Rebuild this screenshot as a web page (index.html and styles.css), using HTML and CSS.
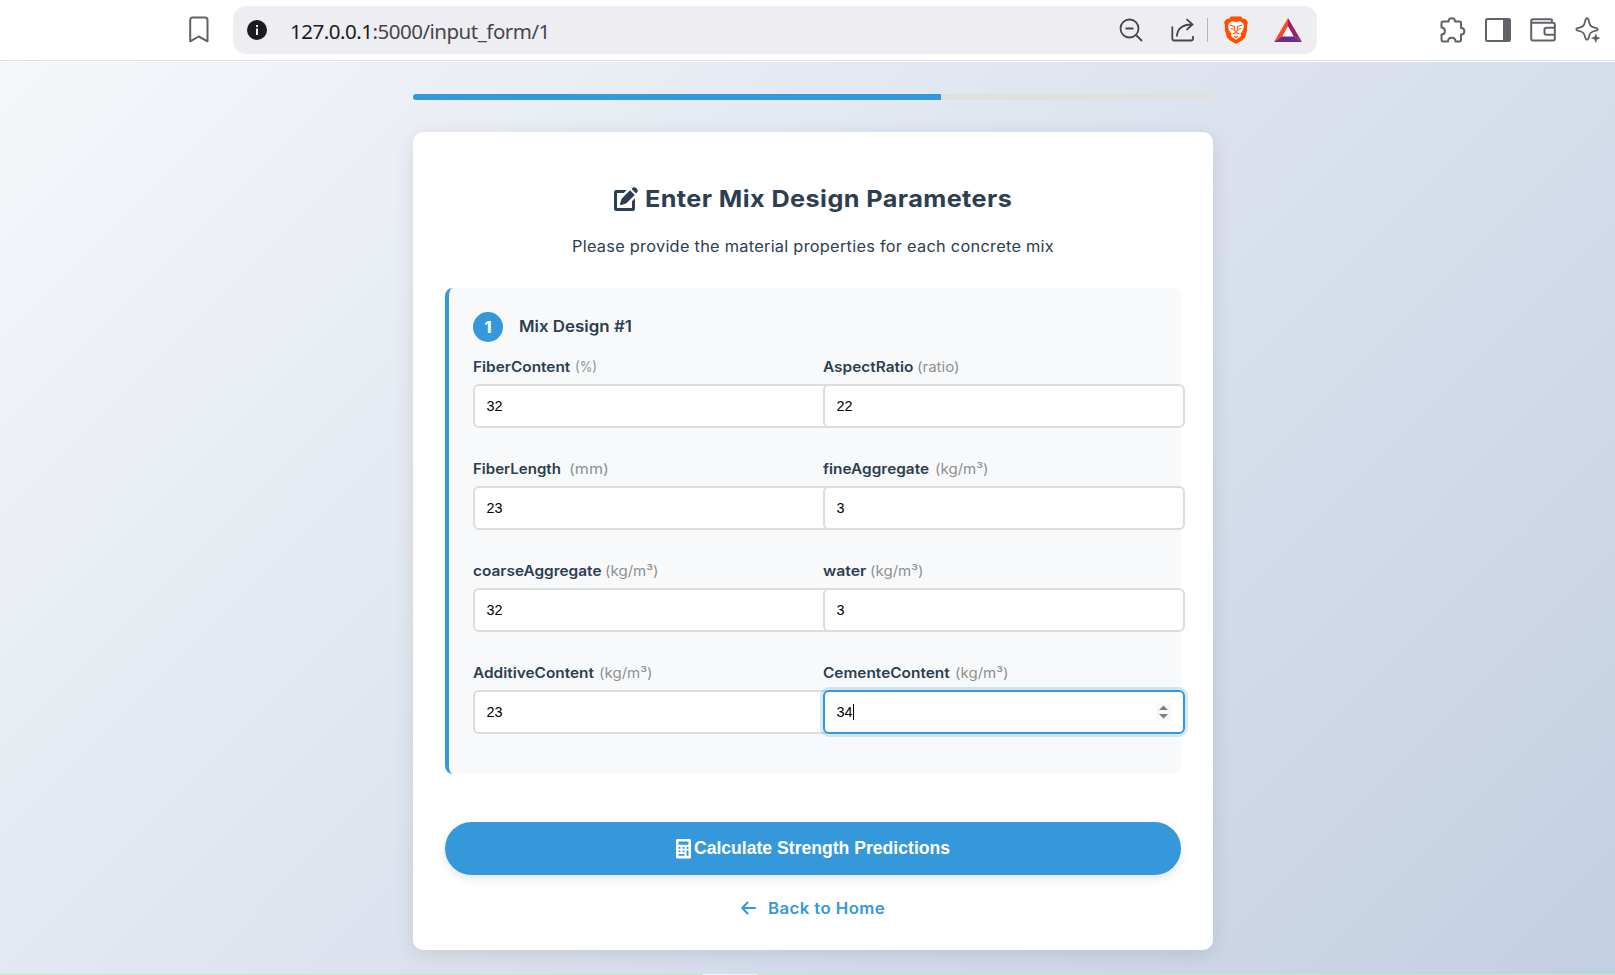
FILE: index.html
```html
<!DOCTYPE html>
<html lang="en">
<head>
<meta charset="utf-8">
<title>Enter Mix Design Parameters</title>
<link rel="stylesheet" href="styles.css">
</head>
<body>
<header class="toolbar">
  <svg class="bookmark" width="20" height="28" viewBox="0 0 20 28" fill="none" stroke="#5f6368" stroke-width="2" stroke-linejoin="round"><path d="M1.2 4Q1.2 1.5 3.7 1.5H16Q18.5 1.5 18.5 4V25.3L9.8 20.5L1.2 25.3Z"/></svg>
  <div class="address">
    <svg class="info" width="20" height="20" viewBox="0 0 20 20"><circle cx="10" cy="10" r="10" fill="#1b1b20"/><path d="M9 5h2v2H9zM9 8.5h2V15H9z" fill="#eeedf2"/></svg>
    <span class="url"><b>127.0.0.1</b>:5000/input_form/1</span>
    <svg class="zoomout" width="24" height="24" viewBox="0 0 24 24" fill="none" stroke="#46464b" stroke-width="1.8"><circle cx="10.5" cy="10.5" r="9"/><path d="M6.5 10.5h8M17 17l6 6"/></svg>
    <svg class="share" width="24" height="24" viewBox="0 0 24 24" fill="none" stroke="#46464b" stroke-width="1.8"><path d="M1.3 8.5V20.500Q1.300 22.500 3.300 22.500H20Q22 22.500 22 20.500V18M6 18.500C6 11 11 6.500 21 6.500M15.500 1.200L21.500 6.500L15.500 11.800"/></svg>
    <i class="divider"></i>
    <svg class="brave" width="24" height="28" viewBox="0 0 24 28"><path fill="#ff5000" d="M7 .5h10l2 2.300 2.500.2L24 6.300 23 9l.2 5-2.200 7.500-3 3L12 28l-6-3.500-3-3L.8 14 1 9 0 6.300 2.500 3 5 2.800Z"/><path fill="#fff" d="M8 5.200l4 .8 4-.8 3 2 1 2.800-1 4.500-2.500 3 .5 2.500-5 3.800L7 20l.5-2.500L5 14.500 4 10l1-2.800Z"/><path d="M6 9l4.500 1.500M18 9l-4.500 1.500M10.700 10.500l-.7 4 2 1 2-1-.7-4M8.500 18l3.500-1.500 3.500 1.500M7 12.500l2 .6M17 12.500l-2 .6M10 20l2 1.500 2-1.500" fill="none" stroke="#ff5000" stroke-width="1.100"/></svg>
    <svg class="bat" width="28" height="24" viewBox="0 0 28 24"><path fill="#ff4724" d="M14 0L0 24 8.500 18 14 8.500Z"/><path fill="#9e1f63" d="M14 0L28 24 19.500 18 14 8.500Z"/><path fill="#662d91" d="M0 24H28L19.500 18H8.500Z"/><path fill="#fff" d="M14 8.500L19.500 18.500H8.500Z"/></svg>
  </div>
  <div class="actions">
    <svg width="26" height="26" viewBox="0 0 26 26" fill="none" stroke="#5f6368" stroke-width="2" stroke-linejoin="round"><path d="M3 4.500H8.500C8.500 0 15 0 15 4.500H19.500Q21 4.500 21 6V11C25.500 11 25.500 17.500 21 17.500V22.500Q21 24.500 19.500 24.500H15.500C15.500 19.500 8 19.500 8 24.500H3.500Q1.500 24.500 1.500 22.500V17.500C6 17.500 6 10.500 1.500 10.500V6Q1.500 4.500 3 4.500Z"/></svg>
    <svg width="26" height="24" viewBox="0 0 26 24"><rect x="1" y="1" width="24" height="22" rx="1.500" fill="none" stroke="#5f6368" stroke-width="2"/><path fill="#5f6368" d="M18 1h7v22h-7z"/></svg>
    <svg width="26" height="24" viewBox="0 0 26 24" fill="none" stroke="#5f6368" stroke-width="2"><path d="M22 4.500V2.500Q22 1.200 20.500 1.200H3Q1.200 1.200 1.200 3V20.500Q1.200 22.500 3 22.500H23Q24.800 22.500 24.800 20.500V6.500Q24.800 4.700 23 4.700H2"/><path d="M24.500 9.800H16.500Q14.500 9.800 14.500 11.500V15Q14.500 16.800 16.500 16.800H24.500"/></svg>
    <svg width="26" height="26" viewBox="0 0 26 26"><path fill="none" stroke="#5f6368" stroke-width="1.800" stroke-linejoin="round" d="M10.800 2Q12 .5 13.300 2L14.500 6.500Q15.300 9.500 18 10.200L22 11.300Q23.300 12.300 22 13.300L18 14.500Q15.300 15.300 14.500 18L13.300 22Q12 23.500 10.800 22L9.500 18Q8.700 15.300 6 14.500L2 13.300Q.7 12.300 2 11.300L6 10.200Q8.700 9.500 9.500 6.500Z"/><path fill="#5f6368" d="M20.800 16.500L22.200 19.800 25.500 21.200 22.200 22.600 20.800 26 19.400 22.600 16 21.200 19.400 19.800Z"/></svg>
  </div>
</header>
<main class="page">
  <div class="progress"><div class="progress-fill"></div></div>
  <section class="card">
    <h1 class="title"><svg class="edit" width="24" height="24" viewBox="0 0 512 512" fill="currentColor"><path d="M471.600 21.700c-21.900-21.900-57.300-21.900-79.200 0L374 40l97.900 97.900 18.400-18.400c21.900-21.900 21.900-57.300 0-79.200L471.600 21.700zM172.400 241.700c-6.100 6.100-10.800 13.600-13.500 21.900l-29.600 88.800c-2.900 8.600-.6 18.100 5.800 24.600s15.900 8.700 24.600 5.800l88.800-29.600c8.200-2.700 15.700-7.400 21.900-13.500L442 168 344 70 172.400 241.700z"/><path d="M48 64H270L206 128H64V448H384V306L448 242V464Q448 512 400 512H48Q0 512 0 464V112Q0 64 48 64z"/></svg><span class="title-text">Enter Mix Design Parameters</span></h1>
    <p class="subtitle">Please provide the material properties for each concrete mix</p>
    <div class="mix">
      <h2 class="mix-head"><span class="badge">1</span><span class="mix-name">Mix Design #1</span></h2>
      <div class="grid">
        <div class="field"><label><b class="fiber-content">FiberContent</b><small class="percent">(%)</small></label><div class="input">32</div></div>
        <div class="field"><label><b class="aspect-ratio">AspectRatio</b><small>(ratio)</small></label><div class="input">22</div></div>
        <div class="field"><label><b class="fiber-length">FiberLength</b><small class="millimetre">(mm)</small></label><div class="input">23</div></div>
        <div class="field"><label><b class="fine-aggregate">fineAggregate</b><small>(kg/m³)</small></label><div class="input">3</div></div>
        <div class="field"><label><b class="coarse-aggregate">coarseAggregate</b><small>(kg/m³)</small></label><div class="input">32</div></div>
        <div class="field"><label><b class="water">water</b><small>(kg/m³)</small></label><div class="input">3</div></div>
        <div class="field"><label><b class="additive-content">AdditiveContent</b><small>(kg/m³)</small></label><div class="input">23</div></div>
        <div class="field"><label><b class="cement-content">CementeContent</b><small>(kg/m³)</small></label><div class="input focused"><span>34</span><i class="caret"></i><svg class="spin" width="15" height="16" viewBox="0 0 15 16"><path fill="#f8f8f8" d="M0 0h15v16H0z"/><path fill="#7d7d7d" d="M3 6h9L7.500 1.500zM3 10h9l-4.500 4.500z"/></svg></div></div>
      </div>
    </div>
    <button class="submit"><svg width="15" height="20" viewBox="0 0 15 20"><path fill="#fff" fill-rule="evenodd" d="M1.500 0h12Q15 0 15 1.500v16.500Q15 19.500 13.500 19.500h-12Q0 19.500 0 18V1.500Q0 0 1.500 0zM2.500 2.500v3.200h10V2.500zM2.500 8v1.700h2V8zM6.500 8v1.700h2V8zM10.500 8v1.700h2V8zM2.500 11.500v1.700h2v-1.700zM6.500 11.500v1.700h2v-1.700zM10.500 11.500v5.200h2v-5.200zM2.500 15v1.700h6V15z"/></svg><span>Calculate Strength Predictions</span></button>
    <a class="back"><svg width="15" height="14" viewBox="0 0 15 14" fill="none" stroke="#3498db" stroke-width="2" stroke-linecap="round" stroke-linejoin="round"><path d="M14 7H1.200M6.500 1.500L1.200 7l5.300 5.500"/></svg><span class="back-text">Back to Home</span></a>
  </section>
  <div class="strip"><i></i></div>
</main>
</body>
</html>
```
FILE: styles.css
```css
* { box-sizing: border-box; }
body { margin: 0; height: 975px; overflow: hidden; display: flex; flex-direction: column; font-family: Inter, "Open Sans", sans-serif; color: #2c3e50; }
svg { flex: none; display: block; }

.toolbar { height: 62px; flex: none; background: #fff; border-bottom: 1px solid #fff; box-shadow: inset 0 -1px #dfe0e4; display: flex; align-items: center; padding-bottom: 1px; }
.bookmark { margin-left: 189px; }
.address { margin-left: 24px; width: 1084px; height: 48px; border-radius: 13px; background: #eeedf2; display: flex; align-items: center; }
.info { margin-left: 14px; }
.url { margin-left: 23px; width: 829px; padding-top: 1px; font: 20.5px "Noto Sans", sans-serif; letter-spacing: -0.49px; color: #46464b; white-space: nowrap; }
.url b { font-weight: 400; color: #1b1b20; }
.share { margin-left: 28px; }
.divider { width: 1px; height: 24px; background: #b5b5bc; margin: 0 16px 0 12px; }
.bat { margin-left: 26px; }
.actions { margin-left: 123px; display: flex; align-items: center; gap: 19px; }

.page { flex: 1; background: linear-gradient(135deg, #f5f7fa 0%, #c3cfe2 100%); display: flex; flex-direction: column; align-items: center; padding-top: 32px; }
.progress { width: 800px; height: 6px; flex: none; background: #e0e0e0; border-radius: 3px; overflow: hidden; margin-left: 11px; }
.progress-fill { width: 66%; height: 100%; background: #3498db; }
.card { width: 800px; height: 818px; flex: none; margin: 32px 0 0 11px; padding: 51px 32px 0; background: #fff; border-radius: 10px; box-shadow: 0 4px 20px rgba(0, 0, 0, 0.1); display: flex; flex-direction: column; align-items: stretch; }

/* Headings and labels are set slightly extended */
.title-text, .subtitle, .mix-name, label b, label small, .back-text { transform-origin: left center; white-space: nowrap; }

.title { margin: 0; height: 32px; display: flex; align-items: center; justify-content: center; gap: 7px; font-size: 23.5px; font-weight: 700; line-height: 32px; letter-spacing: 0.4px; }
.title-text { width: 367px; transform: scaleX(1.073); }
.subtitle { margin: 19px 0 0; height: 26px; line-height: 26px; font-size: 15.2px; font-weight: 400; text-align: center; letter-spacing: 0.25px; transform: scaleX(1.075); transform-origin: center; }
.mix { margin-top: 28px; height: 486px; border-left: 4px solid #3498db; border-radius: 8px; background: #f8f9fa; padding: 24px; }
.mix-head { margin: 0; height: 30px; display: flex; align-items: center; gap: 16px; font-size: 15.5px; font-weight: 600; }
.mix-name { transform: scaleX(1.09); padding-bottom: 2px; }
.badge { width: 30px; height: 30px; border-radius: 50%; background: #3498db; color: #fff; font-size: 16px; font-weight: 800; display: flex; align-items: center; justify-content: center; padding-bottom: 1px; }
.grid { margin-top: 12px; display: grid; grid-template-columns: 334px 334px; column-gap: 16px; }
.field { height: 102px; }
label { display: flex; align-items: center; gap: 5px; height: 24px; margin-bottom: 6px; font-size: 14px; }
label b { font-weight: 600; transform: scaleX(1.1); }
label small { font-size: 14px; color: #8d9091; font-weight: 400; transform: scaleX(1.075); }
.fiber-content { width: 97px; }
.aspect-ratio { width: 89px; }
.fiber-length { width: 91px; transform: scaleX(1.075); }
.fine-aggregate { width: 107px; }
.coarse-aggregate { width: 127px; }
.water { width: 42px; transform: scaleX(1.13); }
.additive-content { width: 121px; }
.cement-content { width: 127px; }
label .percent { transform: scaleX(0.92); }
label .millimetre { transform: scaleX(1.15); }
.input { width: 362px; height: 44px; padding: 0 12px 0 11.5px; border: 2px solid #ddd; border-radius: 6px; background: #fff; color: #000; font: 14.4px "Liberation Sans", Arial, sans-serif; display: flex; align-items: center; position: relative; }
.focused { border-color: #3498db; box-shadow: 0 0 0 3px rgba(52, 152, 219, 0.2); }
.caret { width: 1px; height: 16px; background: #000; }
.spin { margin-left: auto; }
.submit { margin: 48px 0 0; height: 53px; flex: none; border: 0; border-radius: 27px; background: #3498db; color: #fff; box-shadow: 0 4px 10px rgba(0, 0, 0, 0.1); font: bold 17.6px "Liberation Sans", Arial, sans-serif; display: flex; align-items: center; justify-content: center; gap: 3px; }
.back { margin-top: 21px; height: 24px; display: flex; align-items: center; justify-content: center; gap: 12px; color: #3498db; font-size: 15.5px; font-weight: 600; letter-spacing: 0.4px; }
.back-text { width: 117px; transform: scaleX(1.08); }
.strip { width: 100%; height: 1px; flex: none; margin-top: 24px; background: #c5e5d3; display: flex; }
.strip i { margin-left: 703px; width: 55px; background: #eef1f5; }
```
